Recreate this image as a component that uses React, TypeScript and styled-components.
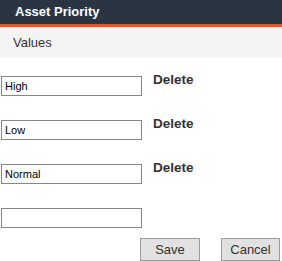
import React from 'react';
import styled, { createGlobalStyle } from 'styled-components';

const GlobalStyle = createGlobalStyle`
  body {
    margin: 0;
    background: #ffffff;
    font-family: "Liberation Sans", Arial, sans-serif;
  }
`;

const Panel = styled.div`
  width: 282px;
`;

const Header = styled.div`
  height: 24px;
  background-color: #2a3442;
  border-bottom: 3px solid #e4572e;
  color: #ffffff;
  font-size: 13px;
  font-weight: bold;
  line-height: 24px;
  padding-left: 15px;
  box-sizing: content-box;
`;

const SubHeader = styled.div`
  height: 31px;
  background-color: #f3f3f3;
  color: #333333;
  font-size: 13px;
  line-height: 31px;
  padding-left: 13px;
`;

const Form = styled.div`
  display: flex;
  flex-direction: column;
  gap: 18px;
  padding-top: 12px;
`;

const Row = styled.div`
  display: flex;
  align-items: flex-start;
`;

const ValueInput = styled.input`
  width: 141px;
  height: 20px;
  margin: 6px 0 0 1px;
  padding: 0 3px;
  box-sizing: border-box;
  border: 1px solid #858585;
  font-family: "Liberation Sans", Arial, sans-serif;
  font-size: 11px;
  color: #000000;
  outline: none;
`;

const DeleteLink = styled.span`
  margin: 2px 0 0 11px;
  font-size: 13.5px;
  font-weight: bold;
  color: #333333;
  line-height: 16px;
  cursor: pointer;
`;

const Actions = styled.div`
  display: flex;
  justify-content: flex-end;
  gap: 21px;
  padding-right: 2px;
  margin-top: -8px;
`;

const Button = styled.button`
  width: ${(p: { $w: number }) => p.$w}px;
  height: 23px;
  background-color: #e1e1e1;
  border: 1px solid #9a9a9a;
  color: #333333;
  font-family: "Liberation Sans", Arial, sans-serif;
  font-size: 13px;
  padding: 0;
`;

const values = ['High', 'Low', 'Normal'];

const App = () => {
  return (
    <Panel>
      <GlobalStyle />
      <Header>Asset Priority</Header>
      <SubHeader>Values</SubHeader>
      <Form>
        {values.map((v) => (
          <Row key={v}>
            <ValueInput defaultValue={v} />
            <DeleteLink>Delete</DeleteLink>
          </Row>
        ))}
        <Row>
          <ValueInput defaultValue="" />
        </Row>
        <Actions>
          <Button $w={60}>Save</Button>
          <Button $w={59}>Cancel</Button>
        </Actions>
      </Form>
    </Panel>
  );
};

export default App;
